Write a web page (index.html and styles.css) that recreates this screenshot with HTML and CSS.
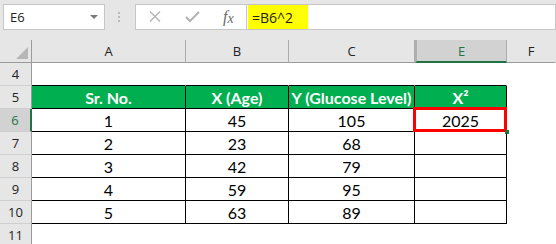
FILE: index.html
```html
<!DOCTYPE html>
<html lang="en">
<head>
    <meta charset="UTF-8">
    <title>Sheet</title>
    <link rel="stylesheet" href="styles.css">
</head>
<body>

<div class="toolbar">
    <div class="namebox">
        <span>E6</span>
        <span class="caret"></span>
    </div>
    <div class="grip"><i></i><i></i><i></i></div>
    <div class="fbtns">
        <svg class="ico" width="14" height="12" viewBox="0 0 14 12">
            <path d="M2 0.5 L12 10.5 M12 0.5 L2 10.5" stroke="#b3b3b3" stroke-width="1.4" fill="none"/>
        </svg>
        <svg class="ico" width="15" height="12" viewBox="0 0 15 12">
            <path d="M1 6 L5 10 L14 1" stroke="#b3b3b3" stroke-width="2" fill="none"/>
        </svg>
        <span class="fx"><i>f</i><i class="fx-x">x</i></span>
    </div>
    <div class="fcontent">
        <span class="formula">=B6^2</span>
    </div>
</div>

<div class="sheet">
    <!-- column headers -->
    <div class="cell corner"><span class="tri"></span></div>
    <div class="cell hd">A</div>
    <div class="cell hd">B</div>
    <div class="cell hd">C</div>
    <div class="cell hd hd-sel">E</div>
    <div class="cell hd last">F</div>

    <!-- row 4 -->
    <div class="cell rh">4</div>
    <div class="cell top"></div>
    <div class="cell top"></div>
    <div class="cell top"></div>
    <div class="cell top"></div>
    <div class="cell"></div>

    <!-- row 5 -->
    <div class="cell rh">5</div>
    <div class="cell t th">Sr. No.</div>
    <div class="cell t th">X (Age)</div>
    <div class="cell t th">Y (Glucose Level)</div>
    <div class="cell t th">X²</div>
    <div class="cell"></div>

    <!-- row 6 -->
    <div class="cell rh rh-sel">6</div>
    <div class="cell t">1</div>
    <div class="cell t">45</div>
    <div class="cell t">105</div>
    <div class="cell t active">2025</div>
    <div class="cell"></div>

    <div class="cell rh">7</div>
    <div class="cell t">2</div>
    <div class="cell t">23</div>
    <div class="cell t">68</div>
    <div class="cell t"></div>
    <div class="cell"></div>

    <div class="cell rh">8</div>
    <div class="cell t">3</div>
    <div class="cell t">42</div>
    <div class="cell t">79</div>
    <div class="cell t"></div>
    <div class="cell"></div>

    <div class="cell rh">9</div>
    <div class="cell t">4</div>
    <div class="cell t">59</div>
    <div class="cell t">95</div>
    <div class="cell t"></div>
    <div class="cell"></div>

    <div class="cell rh">10</div>
    <div class="cell t">5</div>
    <div class="cell t">63</div>
    <div class="cell t">89</div>
    <div class="cell t"></div>
    <div class="cell"></div>

    <div class="cell rh">11</div>
    <div class="cell"></div>
    <div class="cell"></div>
    <div class="cell"></div>
    <div class="cell"></div>
    <div class="cell"></div>
</div>

</body>
</html>
```

FILE: styles.css
```css
body { margin: 0; background: #fff; overflow: hidden; font-family: "Open Sans", sans-serif; }

/* formula bar */
.toolbar { height: 40px; background: #e6e6e6; display: flex; align-items: flex-start; padding-top: 4px; box-sizing: border-box; }
.namebox { margin-left: 3px; width: 102px; height: 26px; box-sizing: border-box; border: 1px solid #c6c6c6; background: #fff; display: flex; align-items: center; justify-content: space-between; padding: 0 6px 0 6px; font-size: 13px; color: #222; }
.caret { width: 0; height: 0; border-left: 4px solid transparent; border-right: 4px solid transparent; border-top: 4px solid #7a7a7a; }
.grip { margin-left: 13px; margin-top: 8px; display: flex; flex-direction: column; gap: 2px; }
.grip i { display: block; width: 2px; height: 2px; background: #b9b9b9; }
.fbtns { margin-left: 15px; width: 111px; height: 26px; box-sizing: border-box; border: 1px solid #c6c6c6; border-right: none; background: #fff; display: flex; align-items: center; padding-left: 12px; gap: 23px; }
.fx { font-family: "Liberation Serif", serif; font-size: 16px; color: #6a6a6a; margin-left: 0; }
.fx-x { font-size: 14px; position: relative; top: 1px; }
.fcontent { flex: 1; height: 26px; box-sizing: border-box; border: 1px solid #c6c6c6; background: #fff; padding: 0 0 0 1px; display: flex; }
.formula { background: #ffff00; padding: 0 15px 0 4px; display: flex; align-items: center; font-size: 14px; color: #222; }

/* grid */
.sheet { display: grid; grid-template-columns: 32px 154px 103px 126px 92px 1fr; grid-auto-rows: 23px; font-family: "Lato", sans-serif; font-size: 16px; color: #000; }
.cell { box-sizing: border-box; border-right: 1px solid transparent; border-bottom: 1px solid transparent; display: flex; align-items: center; justify-content: center; }
.corner { background: #e6e6e6; border-right-color: #9b9b9b; border-bottom-color: #9b9b9b; position: relative; }
.tri { position: absolute; right: 3px; bottom: 3px; width: 12px; height: 12px; background: #b7b7b7; clip-path: polygon(100% 0, 100% 100%, 0 100%); }
.hd { background: #e6e6e6; border-right-color: #acacac; border-bottom-color: #9b9b9b; font-family: "Open Sans", sans-serif; font-size: 13px; color: #222; }
.hd-sel { background: #d2d2d2; border-left: 2px solid #b0b0b0; border-bottom: 2px solid #217346; color: #217346; }
.hd.last { border-right-color: transparent; }
.rh { background: #e6e6e6; border-right-color: #9b9b9b; border-bottom-color: #cfcfcf; font-family: "Open Sans", sans-serif; font-size: 13px; color: #222; }
.rh-sel { background: #d2d2d2; border-right: 2px solid #217346; color: #217346; }
.top { border-bottom-color: #000; }
.t { border-right-color: #000; border-bottom-color: #000; }
.th { background: #00b050; color: #fff; font-weight: bold; }
.active { position: relative; }
.active::after { content: ""; position: absolute; left: -2px; top: -2px; right: -1px; bottom: -1px; border: 3px solid #ff0000; }
.active::before { content: ""; position: absolute; right: -3px; bottom: -3px; width: 4px; height: 4px; background: #217346; z-index: 1; }
```
